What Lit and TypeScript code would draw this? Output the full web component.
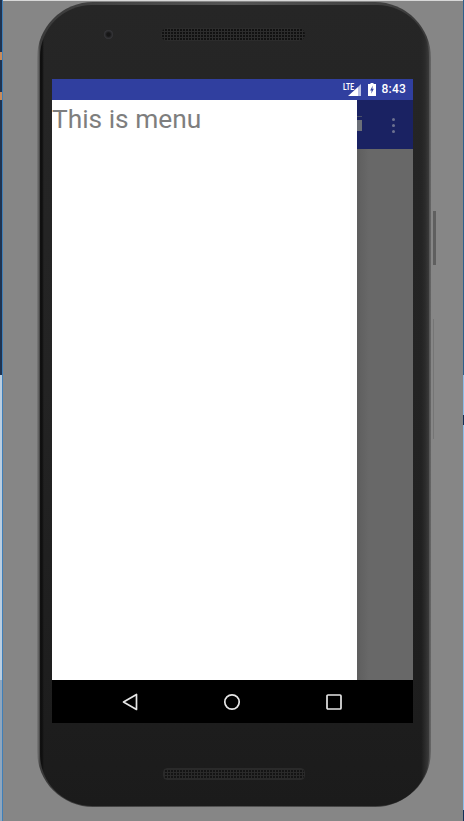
import { LitElement, html, css } from "lit";
import { customElement } from "lit/decorators.js";

@customElement("app-root")
export class AppRoot extends LitElement {
  static styles = css`
    :host { display: block; width: 464px; height: 821px; overflow: hidden; font-family: Roboto, "Liberation Sans", sans-serif; }
    .page { display: flex; width: 464px; height: 821px; background: #868686; }
    .edge { flex: none; box-sizing: border-box; }
    .edge.left {
      width: 3px; border-right: 1px solid #3f7fb8;
      background: linear-gradient(#1f3350 0 52px, #c98a5a 52px 60px, #1f3350 60px 92px, #c98a5a 92px 100px, #1f3350 100px 375px, #b9cde0 375px 680px, #8fa6bd 680px 821px);
    }
    .edge.right {
      width: 1px;
      background: linear-gradient(#2c5f8c 0 375px, #8cbce8 375px 415px, #12305a 415px 425px, #8cbce8 425px 810px, #12305a 810px 821px);
    }
    .stage { flex: 1; display: flex; flex-direction: column; padding: 1px 0 0 34px; border-top: 1px solid #d8d8d8; box-sizing: border-box; }
    .phone {
      position: relative; box-sizing: border-box; width: 394px; height: 805px; border-radius: 56px;
      background: linear-gradient(90deg, #7c7c7c 0, #5a5a5a 2px, #3a3a3a 3px, #555 50%, #3a3a3a 99%, #6a6a6a 100%);
      display: flex; flex-direction: column; padding: 3px 2px 1px 3px;
    }
    .body {
      flex: 1; border-radius: 52px; display: flex; flex-direction: column; padding: 0 15px 0 12px;
      background:
        linear-gradient(90deg, #111 0, #0f0f0f 2px, transparent 4px, transparent 98%, #2b2b2b 99%, #3a3a3a 100%),
        linear-gradient(#262626, #252525 70px, #232323 380px, #1d1d1d 720px, #1b1b1b);
    }
    .top { flex: none; height: 74px; display: grid; grid-template-columns: 61px 144px; column-gap: 48px; box-sizing: border-box; }
    .cam-cell { display: flex; justify-content: flex-end; padding-top: 25px; }
    .cam { width: 9px; height: 9px; border-radius: 50%; background: radial-gradient(circle, #161616 25%, #38383c 70%, #2a2a2a 100%); }
    .speaker {
      height: 13px; margin-top: 23px; border-radius: 7px; background-color: #111;
      background-image: repeating-linear-gradient(90deg, #2c2c2c 0 1px, transparent 1px 3px), repeating-linear-gradient(#2c2c2c 0 1px, transparent 1px 3px);
    }
    .screen { flex: none; width: 361px; height: 644px; display: flex; flex-direction: column; background: #666; }
    .status { flex: none; height: 21px; background: #303f9f; display: flex; align-items: center; justify-content: flex-end; padding-right: 7px; color: #fff; }
    .status svg { display: block; flex: none; }
    .lte-wrap { position: relative; width: 16px; height: 13px; margin-right: 7px; margin-top: 1px; }
    .lte { position: absolute; left: -2px; top: -1px; font-size: 8.5px; line-height: 8px; font-weight: 700; transform: scaleX(.8); transform-origin: left; text-shadow: 0 0 1px #303f9f; }
    .batt { margin-right: 6px; }
    .time { font-size: 12px; line-height: 21px; font-weight: 500; letter-spacing: .2px; }
    .main { flex: 1; display: flex; min-height: 0; }
    .drawer { flex: none; width: 305px; background: #fff; color: #7e7e7e; font-size: 26.3px; line-height: 38px; font-weight: 400; }
    .scrim { flex: 1; display: flex; flex-direction: column; background: linear-gradient(90deg, #5e5e5e, #686868 12px); }
    .appbar { flex: none; height: 49px; background: #1a2262; box-sizing: border-box; display: flex; }
    .trash { flex: none; width: 5px; padding-top: 16px; display: flex; flex-direction: column; }
    .trash i { display: block; background: #6b6f78; }
    .trash .lid { height: 1px; margin-bottom: 3px; background: #4a4f68; }
    .trash .bin { height: 11px; }
    .dots { margin-left: 30px; padding-top: 18px; display: flex; flex-direction: column; gap: 3px; }
    .dots i { display: block; width: 3px; height: 3px; border-radius: 50%; background: #6d7290; }
    .nav { flex: none; height: 43px; background: #000; display: flex; }
    .nav-icons { flex: 1; display: flex; padding-left: 70px; align-items: center; gap: 86px; }
    .nav svg { display: block; flex: none; }
    .nudge { margin-left: -1px; }
    .bottom { flex: 1; display: flex; justify-content: center; padding-top: 45px; box-sizing: border-box; }
    .speaker2 {
      width: 142px; height: 12px; margin-left: 2px; border-radius: 4px; background-color: #141414; border: 1px solid #2a2a2a; box-sizing: border-box;
      background-image: repeating-linear-gradient(90deg, #2a2a2a 0 1px, transparent 1px 3px), repeating-linear-gradient(#2a2a2a 0 1px, transparent 1px 3px);
    }
    .btn { position: absolute; left: 396px; }
    .btn.power { top: 209px; height: 54px; background: #5f5f5f; width: 3px; }
    .btn.vol { top: 317px; height: 120px; background: #757575; width: 1px; }
  `;

  render() {
    return html`
      <div class="page">
        <div class="edge left"></div>
        <div class="stage">
          <div class="phone">
            <div class="body">
              <div class="top">
                <div class="cam-cell"><div class="cam"></div></div>
                <div class="speaker"></div>
              </div>
              <div class="screen">
                <div class="status">
                  <div class="lte-wrap">
                    <svg width="16" height="13" viewBox="0 0 16 13">
                      <path d="M3 12 L13 12 L13 3 Z" fill="#fff" />
                      <path d="M13 12 L16 12 L16 0 L13 3 Z" fill="#b9bfe2" />
                    </svg>
                    <span class="lte">LTE</span>
                  </div>
                  <svg class="batt" width="8" height="13" viewBox="0 0 8 13">
                    <path d="M2.5 0 H5.5 V1 H8 V13 H0 V1 H2.5 Z" fill="#fff" />
                    <path d="M4.8 2.6 L2.2 7.6 H3.7 L3.2 10.8 L5.8 5.8 H4.3 Z" fill="#303f9f" />
                  </svg>
                  <span class="time">8:43</span>
                </div>
                <div class="main">
                  <div class="drawer">This is menu</div>
                  <div class="scrim">
                    <div class="appbar">
                      <div class="trash"><i class="lid"></i><i class="bin"></i></div>
                      <div class="dots"><i></i><i></i><i></i></div>
                    </div>
                  </div>
                </div>
                <div class="nav">
                  <div class="nav-icons">
                    <svg width="16" height="18" viewBox="0 0 16 18">
                      <path d="M14.5 1.5 V16.5 L1.5 9 Z" fill="none" stroke="#e6e6e6" stroke-width="1.7" stroke-linejoin="round" />
                    </svg>
                    <svg class="nudge" width="18" height="18" viewBox="0 0 18 18">
                      <circle cx="9" cy="9" r="7.2" fill="none" stroke="#e6e6e6" stroke-width="1.7" />
                    </svg>
                    <svg class="nudge" width="16" height="16" viewBox="0 0 16 16">
                      <rect x="1" y="1" width="14" height="14" rx="1" fill="none" stroke="#e6e6e6" stroke-width="1.7" />
                    </svg>
                  </div>
                </div>
              </div>
              <div class="bottom"><div class="speaker2"></div></div>
            </div>
            <div class="btn power"></div>
            <div class="btn vol"></div>
          </div>
        </div>
        <div class="edge right"></div>
      </div>
    `;
  }
}
